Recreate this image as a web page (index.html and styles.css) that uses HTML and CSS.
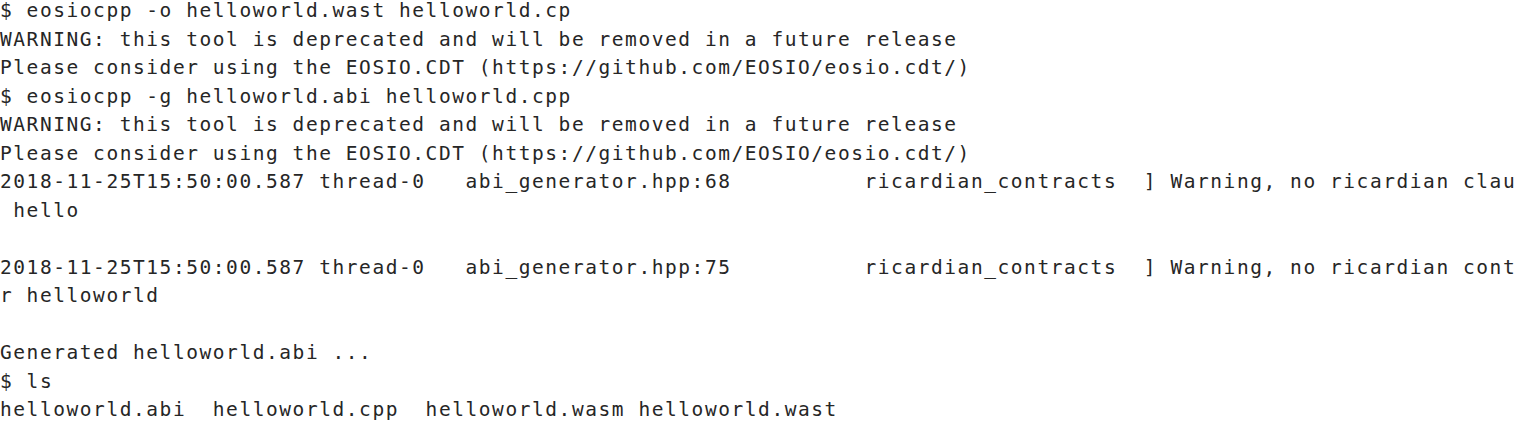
FILE: index.html
```html
<!DOCTYPE html>
<html lang="en">
<head>
<meta charset="utf-8">
<title>Terminal</title>
<link rel="stylesheet" href="styles.css">
</head>
<body>
<pre class="term">$ eosiocpp -o helloworld.wast helloworld.cp
WARNING: this tool is deprecated and will be removed in a future release
Please consider using the EOSIO.CDT (https://github.com/EOSIO/eosio.cdt/)
$ eosiocpp -g helloworld.abi helloworld.cpp
WARNING: this tool is deprecated and will be removed in a future release
Please consider using the EOSIO.CDT (https://github.com/EOSIO/eosio.cdt/)
2018-11-25T15:50:00.587 thread-0   abi_generator.hpp:68          ricardian_contracts  ] Warning, no ricardian clau
 hello

2018-11-25T15:50:00.587 thread-0   abi_generator.hpp:75          ricardian_contracts  ] Warning, no ricardian cont
r helloworld

Generated helloworld.abi ...
$ ls
helloworld.abi  helloworld.cpp  helloworld.wasm helloworld.wast</pre>
</body>
</html>
```
FILE: styles.css
```css
html, body {
  margin: 0;
  padding: 0;
  background: #ffffff;
  overflow: hidden;
}

.term {
  margin: -3px 0 0 0;
  padding: 0;
  font-family: "DejaVu Sans Mono", "Liberation Mono", monospace;
  font-size: 19.5px;
  letter-spacing: 1.56px;
  line-height: 28.5px;
  color: #262626;
  white-space: pre;
  overflow: hidden;
}
```
